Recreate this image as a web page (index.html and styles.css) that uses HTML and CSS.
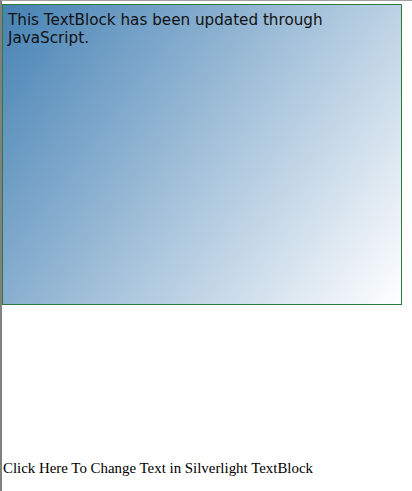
FILE: index.html
```html
<!DOCTYPE html>
<html>
<head>
<meta charset="utf-8">
<link rel="stylesheet" href="styles.css">
</head>
<body>
<div class="frame">
  <div class="plugin">
    <div class="textblock">This TextBlock has been updated through JavaScript.</div>
  </div>
  <div class="link">Click Here To Change Text in Silverlight TextBlock</div>
</div>
</body>
</html>
```
FILE: styles.css
```css
html, body {
  margin: 0;
  padding: 0;
  background: #fff;
}
.frame {
  height: 490px;
  border-top: 1px solid #a0a0a0;
  border-left: 2px solid #808080;
  overflow: hidden;
}
.plugin {
  margin-top: 3px;
  width: 400px;
  height: 301px;
  box-sizing: border-box;
  border: 1px solid #2d7a3a;
  background: linear-gradient(126.87deg, #4682b4, #ffffff);
}
.textblock {
  padding: 6px 0 0 5px;
  font-family: "DejaVu Sans", Verdana, sans-serif;
  font-size: 15.2px;
  line-height: 18px;
  color: #111;
  width: 350px;
}
.link {
  margin-top: 154px;
  margin-left: 1px;
  font-family: "Liberation Serif", "Times New Roman", serif;
  font-size: 14.9px;
  line-height: 19px;
  color: #000;
}
```
